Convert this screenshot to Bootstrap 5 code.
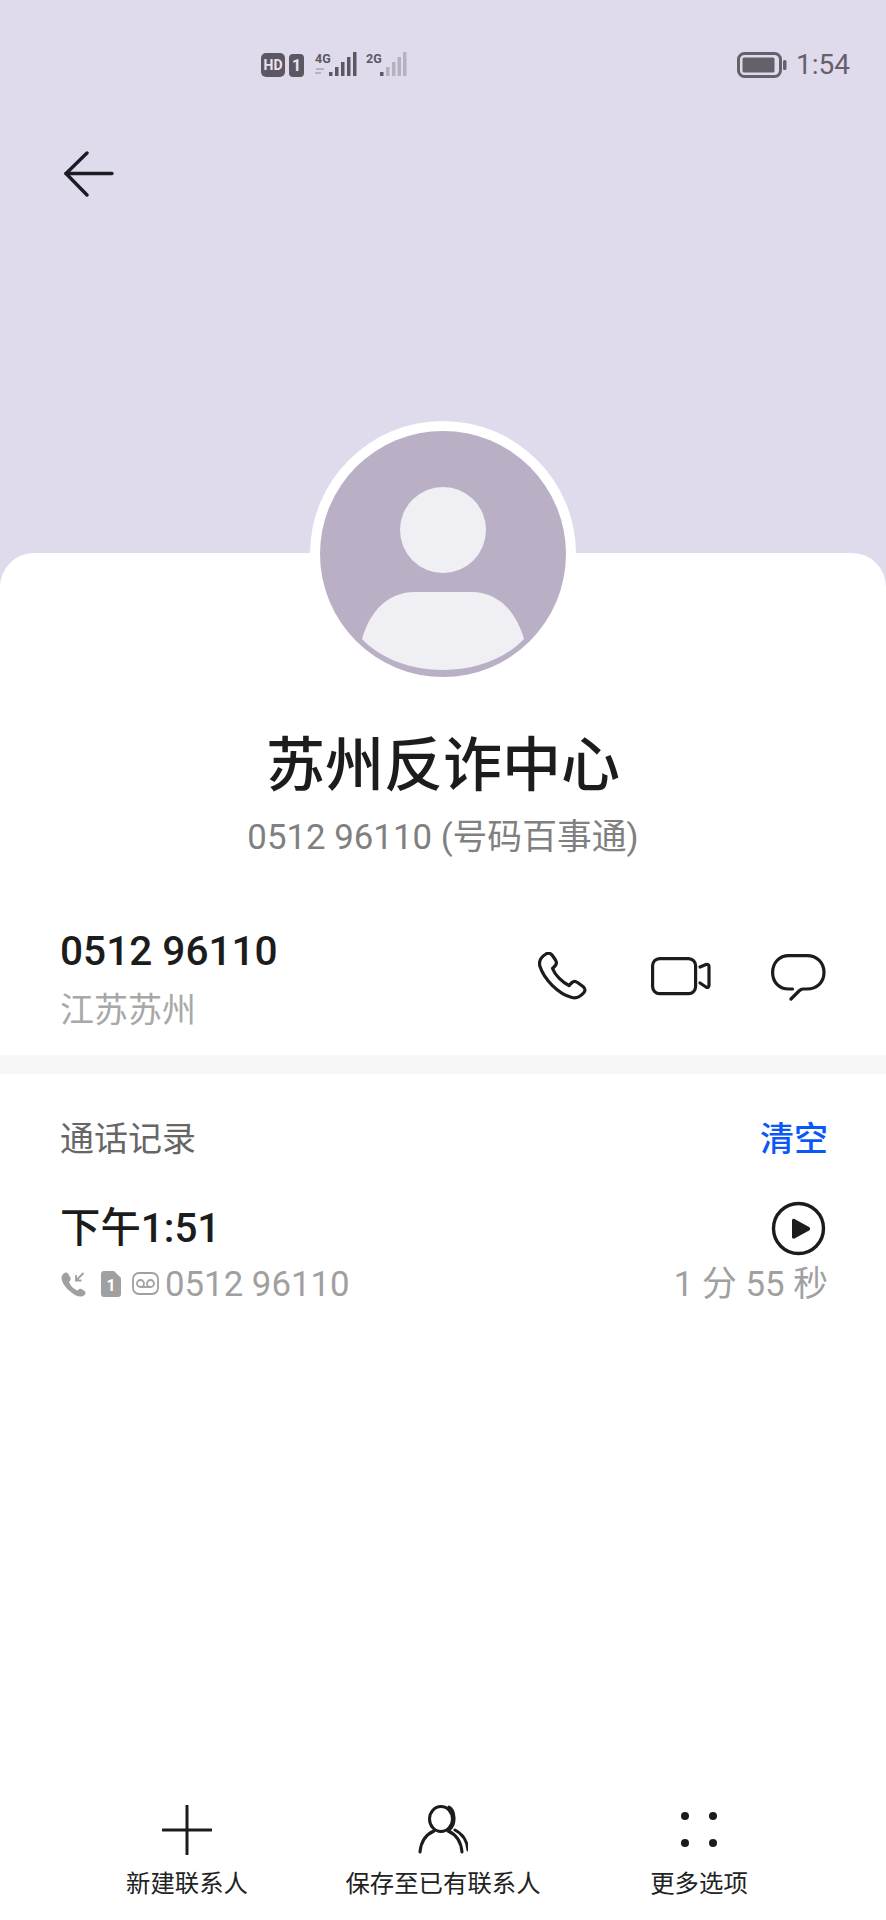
<!DOCTYPE html>
<html lang="zh-CN">
<head>
    <meta charset="UTF-8">
    <meta name="viewport" content="width=device-width, initial-scale=1.0">
    <title>苏州反诈中心</title>
    <link href="https://cdn.jsdelivr.net/npm/bootstrap@5.3.0/dist/css/bootstrap.min.css" rel="stylesheet">
    <style>
        body {
            background-color: #e0daed;
            font-family: Roboto, "Noto Sans CJK SC", sans-serif;
            color: #1c1c1c;
        }
        svg { display: block; flex-shrink: 0; }
        .top-area { height: 553px; }
        .status-bar { height: 78px; padding: 52px 36px 0 261px; }
        .status-time { font-size: 28px; line-height: 26px; color: #66606b; margin-left: 9px; }
        .svg-2g { margin-left: 5px; }
        .back-btn { margin: 73px 0 0 64px; }
        .sheet { border-radius: 34px 34px 0 0; }
        .avatar-ring {
            width: 266px;
            height: 266px;
            margin: -132px auto 0;
            padding: 10px;
            border-radius: 50%;
            background-color: #fff;
        }
        .contact-name { font-size: 59px; line-height: 70px; font-weight: 500; margin-top: 44px; }
        .contact-sub { font-size: 34.8px; line-height: 44px; color: #808080; margin-top: 14px; }
        .info-row { padding: 0 60px; }
        .main-row { margin-top: 63px; height: 133px; padding-top: 5px; }
        .num-big { font-size: 40.6px; line-height: 48px; font-weight: 500; }
        .num-place { font-size: 34px; line-height: 44px; color: #a8a8a8; margin-top: 13px; }
        .action-icons { height: 50px; margin-top: 25px; }
        .video-svg { margin-left: 63px; }
        .chat-svg { margin-left: 60px; }
        .gap-bar { height: 19px; background-color: #f7f7f7; }
        .log-head { height: 44px; margin-top: 43px; padding-right: 58px; font-size: 34px; line-height: 44px; color: #666; }
        .clear-link { color: #0a59f7; font-weight: 500; text-decoration: none; }
        .log-time { font-size: 40.4px; line-height: 48px; font-weight: 500; margin-top: 2px; }
        .log-sub { font-size: 34.8px; line-height: 42px; color: #a0a0a0; padding-right: 58px; }
        .log-first { margin-top: 37px; height: 60px; margin-bottom: 5px; }
        .sim-svg { margin-left: 14px; }
        .mail-svg { margin-left: 11px; }
        .log-num { margin-left: 6px; }
        .bottom-bar { padding: 0 59px 19px; }
        .bottom-label { font-size: 24.4px; line-height: 34px; color: #222; margin-top: 12px; }
        .bottom-icon { height: 50px; }
    </style>
</head>
<body class="min-vh-100 d-flex flex-column">
    <!-- Header -->
    <div class="top-area">
        <div class="status-bar d-flex align-items-center">
            <svg width="44" height="26" viewBox="0 0 44 26">
                <rect x="0" y="1" width="24" height="24" rx="5" fill="#5d5764"/>
                <text x="12" y="18" text-anchor="middle" font-size="14" font-weight="700" font-family="Roboto" fill="#e8e3f1">HD</text>
                <rect x="28" y="2" width="15" height="23" rx="4" fill="#5d5764"/>
                <text x="35.5" y="19" text-anchor="middle" font-size="16" font-weight="700" font-family="Roboto" fill="#e8e3f1">1</text>
            </svg>
            <svg class="ms-2" width="48" height="26" viewBox="0 0 48 26" fill="#5d5764">
                <text x="2" y="11" font-size="12.500" font-weight="700" font-family="Roboto">4G</text>
                <path d="M3 17h8M8 21H2" stroke="#b7b0c0" stroke-width="2" fill="none"/>
                <rect x="16" y="20" width="3.500" height="4"/>
                <rect x="22" y="15" width="3.500" height="9"/>
                <rect x="28" y="10" width="3.500" height="14"/>
                <rect x="34" y="5" width="3.500" height="19"/>
                <rect x="40" y="0" width="3.500" height="24"/>
            </svg>
            <svg class="svg-2g" width="44" height="26" viewBox="0 0 44 26" fill="#5d5764">
                <text x="0" y="11" font-size="12.500" font-weight="700" font-family="Roboto">2G</text>
                <rect x="14" y="20" width="3.500" height="4"/>
                <rect x="20" y="15" width="3.500" height="9" fill="#b7b0c0"/>
                <rect x="26" y="10" width="3.500" height="14" fill="#b7b0c0"/>
                <rect x="31.500" y="5" width="3.500" height="19" fill="#b7b0c0"/>
                <rect x="37" y="0" width="3.500" height="24" fill="#b7b0c0"/>
            </svg>
            <svg class="ms-auto" width="50" height="26" viewBox="0 0 50 26">
                <rect x="1.500" y="1.500" width="42" height="23" rx="6" fill="none" stroke="#66606b" stroke-width="3"/>
                <rect x="5.500" y="5.500" width="32" height="15" rx="1.500" fill="#66606b"/>
                <rect x="46" y="8" width="3.500" height="10" rx="1.500" fill="#66606b"/>
            </svg>
            <span class="status-time">1:54</span>
        </div>
        <div class="back-btn">
            <svg width="50" height="46" viewBox="0 0 50 46" fill="none" stroke="#1c1c24" stroke-width="3.400" stroke-linecap="round" stroke-linejoin="round">
                <path d="M23 2 2 22.500 23 44"/>
                <path d="M2 22.500H48"/>
            </svg>
        </div>
    </div>

    <!-- Contact sheet -->
    <div class="sheet bg-white flex-grow-1 d-flex flex-column">
        <div class="avatar-ring">
            <svg width="246" height="246" viewBox="0 0 246 246">
                <circle cx="123" cy="123" r="123" fill="#bab0c6"/>
                <circle cx="123" cy="99" r="43" fill="#f0eff4"/>
                <path d="M42 208C50 180 68 161 95 161H151C178 161 196 180 204 208 185 228 155 239 123 239 91 239 61 228 42 208Z" fill="#f0eff4"/>
            </svg>
        </div>
        <div class="contact-name text-center">苏州反诈中心</div>
        <div class="contact-sub text-center">0512 96110 (号码百事通)</div>

        <div class="info-row main-row d-flex justify-content-between">
            <div>
                <div class="num-big">0512 96110</div>
                <div class="num-place">江苏苏州</div>
            </div>
            <div class="action-icons d-flex align-items-center">
                <svg width="50" height="50" viewBox="0 0 50 50" fill="none" stroke="#1c1c1c" stroke-width="3.200" stroke-linejoin="round">
                    <path d="M8 2C10 .5 12 1 14 3L17.500 8C19 10.500 19 12 17 14L14.500 16.500C17 23 24 30 31 33.500L34 30.500C35.500 29 37.500 29 39.500 30.500L45 34.500C47.500 36.500 47.500 39 45.500 41 42 45 38 46.500 34 45.500 20 42 6 27 1.800 14 .6 9 3 5 8 2Z"/>
                </svg>
                <svg class="video-svg" width="60" height="40" viewBox="0 0 60 40" fill="none" stroke="#1c1c1c" stroke-width="3.200" stroke-linecap="round" stroke-linejoin="round">
                    <rect x="1.600" y="1.600" width="43" height="35" rx="7"/>
                    <path d="M49 10 55 7.500C57 7 58 8 58 9.500V28C58 30 57 31 55 30L49 26"/>
                </svg>
                <svg class="chat-svg" width="55" height="47" viewBox="0 0 55 47" fill="none" stroke="#1c1c1c" stroke-width="3.200" stroke-linecap="round" stroke-linejoin="round">
                    <path d="M21.500 35H18C8 35 1.600 28 1.600 18.500 1.600 9 8 1.600 18 1.600H36C46 1.600 53 9 53 18.500 53 28 46 35 36 35H32C30 35 29.500 35.500 28 37L20 45"/>
                </svg>
            </div>
        </div>

        <div class="gap-bar"></div>

        <div class="info-row log-head d-flex justify-content-between">
            <span>通话记录</span>
            <a class="clear-link" href="#">清空</a>
        </div>

        <div class="info-row log-first d-flex justify-content-between align-items-center">
            <div class="log-time">下午1:51</div>
            <svg width="55" height="55" viewBox="0 0 55 55">
                <circle cx="27.500" cy="27.500" r="25" fill="none" stroke="#1c1c1c" stroke-width="3.400"/>
                <path d="M21 19.500C21 18 22.500 17.500 23.500 18L38 26C39.500 27 39.500 28.500 38 29.500L23.500 37.500C22.500 38 21 37.500 21 36Z" fill="#1c1c1c"/>
            </svg>
        </div>
        <div class="info-row log-sub d-flex justify-content-between align-items-center">
            <div class="d-flex align-items-center">
                <svg width="27" height="26" viewBox="0 0 26 26" fill="#a0a0a0">
                    <path d="M4 2C6 1 7.500 2 8.500 4L10 7C10.500 8.500 10 9.500 8.500 11 10 15 13 18 17 19.500 18.500 18 19.500 17.500 21 18L24 20C25.500 21 25.500 23 24 24 20 27 16 25.500 11 21.500 5 17 1 11 1 7 1 5 2 3 4 2Z"/>
                    <path d="M23 2 15.500 9.500M15.500 4V9.500H21" fill="none" stroke="#a0a0a0" stroke-width="1.800"/>
                </svg>
                <svg class="sim-svg" width="20" height="26" viewBox="0 0 20 26">
                    <path d="M3 0H13L20 7V23C20 25 19 26 17 26H3C1 26 0 25 0 23V3C0 1 1 0 3 0Z" fill="#a0a0a0"/>
                    <text x="10" y="20" text-anchor="middle" font-size="16" font-weight="700" font-family="Roboto" fill="#fff">1</text>
                </svg>
                <svg class="mail-svg" width="27" height="24" viewBox="0 0 27 24" fill="none" stroke="#a0a0a0" stroke-width="1.800">
                    <rect x="1" y="1" width="25" height="21" rx="6"/>
                    <circle cx="8.500" cy="11.500" r="3.500"/>
                    <circle cx="18.500" cy="11.500" r="3.500"/>
                    <path d="M8.500 15H18.500"/>
                </svg>
                <span class="log-num">0512 96110</span>
            </div>
            <span>1 分 55 秒</span>
        </div>

        <!-- Bottom actions -->
        <div class="bottom-bar row g-0 mt-auto text-center">
            <div class="col-4">
                <svg class="bottom-icon mx-auto" width="50" height="50" viewBox="0 0 50 50" stroke="#1c1c1c" stroke-width="3" stroke-linecap="round">
                    <path d="M25 1V49M1 25H49"/>
                </svg>
                <div class="bottom-label">新建联系人</div>
            </div>
            <div class="col-4">
                <svg class="bottom-icon mx-auto" width="50" height="50" viewBox="0 0 50 50" fill="none" stroke="#1c1c1c" stroke-width="3" stroke-linecap="round">
                    <ellipse cx="23" cy="14" rx="11.500" ry="12.500"/>
                    <path d="M2 47C3 36 9 29 16 26M30 26C37 29 43 36 44 47M31 2C37 5 38 19 32 24M37 25C45 29 49 36 50 45"/>
                </svg>
                <div class="bottom-label">保存至已有联系人</div>
            </div>
            <div class="col-4">
                <svg class="bottom-icon mx-auto" width="50" height="50" viewBox="0 0 50 50" fill="#1c1c1c">
                    <circle cx="11" cy="11" r="4"/><circle cx="39" cy="11" r="4"/>
                    <circle cx="11" cy="38" r="4"/><circle cx="39" cy="38" r="4"/>
                </svg>
                <div class="bottom-label">更多选项</div>
            </div>
        </div>
    </div>
</body>
</html>
